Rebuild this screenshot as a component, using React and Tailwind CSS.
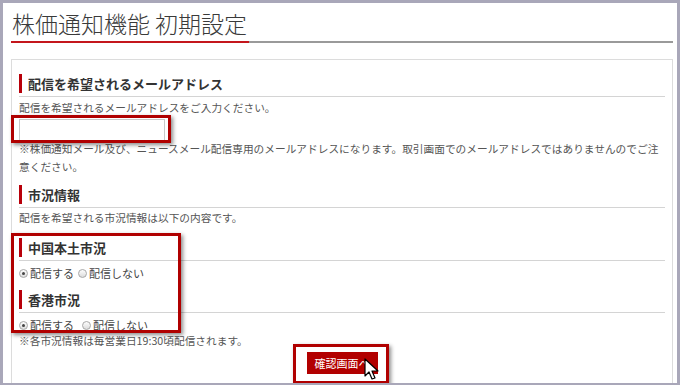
import React from 'react'

const JP = { fontFamily: '"Noto Sans CJK JP", "Noto Sans", sans-serif' }

// ─── Section heading with red left bar ───────────────────────────────────────

function Heading({ children, className = '' }) {
  return (
    <div className={`border-b border-[#d4d4d4] pb-[3px] ${className}`}>
      <div className="border-l-[3px] border-[#b8000a] pl-[6px] text-[13px] font-bold leading-[19px] text-[#333]">
        {children}
      </div>
    </div>
  )
}

function Radio({ checked, label, className = '' }) {
  return (
    <label className={`flex items-center gap-[2px] ${className}`}>
      <span className="w-[9px] h-[9px] rounded-full border border-[#a8a8a8] bg-gradient-to-b from-[#fdfdfd] to-[#dcdcdc] flex items-center justify-center">
        {checked && <span className="w-[3px] h-[3px] rounded-full bg-[#444]" />}
      </span>
      <span>{label}</span>
    </label>
  )
}

function Highlight({ className }) {
  return (
    <div
      className={`absolute border-[3px] border-[#b00000] shadow-[2px_2px_4px_rgba(0,0,0,0.45)] pointer-events-none ${className}`}
    />
  )
}

export default function App() {
  return (
    <div
      className="w-[680px] h-[385px] overflow-hidden bg-white border-[3px] border-b-2 border-[#a9a7b9] pl-[8px] pr-[4px] pt-[5px]"
      style={JP}
    >
      {/* Title */}
      <h1 className="text-[23px] leading-[30px] text-[#3a3a3a] font-light pl-[1px]">株価通知機能 初期設定</h1>
      <div className="flex mt-[3px]">
        <div className="w-[238px] h-[2px] bg-[#c4161c]" />
        <div className="flex-1 h-[2px] bg-[#9a9a9a]" />
      </div>

      {/* Panel */}
      <div className="mt-[16px] border border-[#dcdcdc] pt-[14px] pl-[7px] pr-[7px] pb-[40px] text-[10.7px] text-[#555]">
        <Heading>配信を希望されるメールアドレス</Heading>
        <p className="mt-[2px] leading-[18px]">配信を希望されるメールアドレスをご入力ください。</p>

        <div className="relative mt-[2px] w-[146px]">
          <input className="block w-[146px] h-[22px] border border-[#c8c8c8] bg-white outline-none" />
          <Highlight className="-left-[8px] -top-[4px] w-[160px] h-[28px]" />
        </div>

        <p className="-mt-[1px] leading-[18px]">
          ※株価通知メール及び、ニュースメール配信専用のメールアドレスになります。取引画面でのメールアドレスではありませんのでご注意ください。
        </p>

        <Heading className="mt-[9px]">市況情報</Heading>
        <p className="mt-[1px] leading-[18px]">配信を希望される市況情報は以下の内容です。</p>

        <div className="relative mt-[11px]">
          <Heading>中国本土市況</Heading>
          <div className="flex items-center mt-[4px] leading-[16px] text-[11px] text-[#444]">
            <Radio checked label="配信する" />
            <Radio label="配信しない" className="ml-[4px]" />
          </div>
          <Heading className="mt-[9px]">香港市況</Heading>
          <div className="flex items-center mt-[4px] leading-[16px] text-[11px] text-[#444]">
            <Radio checked label="配信する" />
            <Radio label="配信しない" className="ml-[8px]" />
          </div>
          <Highlight className="-left-[8px] -top-[5px] w-[170px] h-[100px]" />
        </div>

        <p className="leading-[16px]">※各市況情報は毎営業日19:30頃配信されます。</p>

        <div className="flex justify-center mt-[3px]">
          <div className="relative">
            <button className="w-[71px] h-[22px] bg-[#b20000] text-white text-[11px] leading-[22px] text-center">
              確認画面へ
            </button>
            <Highlight className="-left-[14px] -top-[8px] w-[96px] h-[40px]" />
            <svg
              className="absolute left-[57px] top-[6px]"
              width="16"
              height="24"
              viewBox="0 0 16 24"
            >
              <path
                d="M1 1 L1 18 L5 14 L8 21 L11 20 L8 13 L14 13 Z"
                fill="#fff"
                stroke="#000"
                strokeWidth="1.2"
                strokeLinejoin="round"
              />
            </svg>
          </div>
        </div>
      </div>
    </div>
  )
}
